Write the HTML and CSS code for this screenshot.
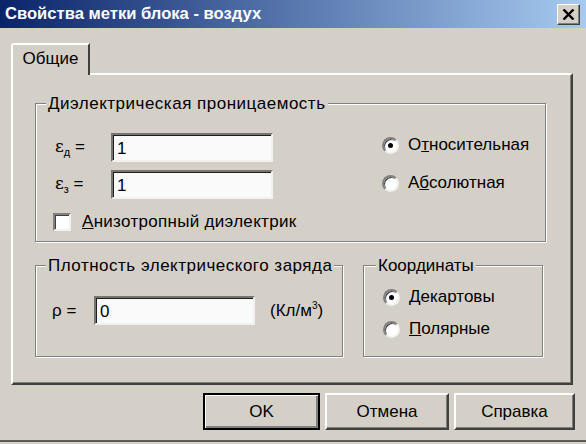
FILE: index.html
```html
<!DOCTYPE html>
<html lang="ru">
<head>
<meta charset="utf-8">
<title>Свойства метки блока - воздух</title>
<link rel="stylesheet" href="styles.css">
</head>
<body>
<div class="window">
  <div class="titlebar">
    <span class="title">Свойства метки блока - воздух</span>
    <span class="close">
      <svg width="13" height="11" viewBox="0 0 13 11"><path d="M1.5 0.5 L11.5 10.5 M11.5 0.5 L1.5 10.5" stroke="#000" stroke-width="2.4" fill="none"/></svg>
    </span>
  </div>
  <div class="body">
    <div class="tabs"><div class="tab">Общие</div></div>
    <div class="panel">
      <div class="group g1">
        <div class="legend">Диэлектрическая проницаемость</div>
        <div class="g1-body">
          <div class="fields">
            <div class="field"><span class="lbl"><span class="eps">ε<sub>д</sub></span> =</span><div class="input">1</div></div>
            <div class="field"><span class="lbl"><span class="eps">ε<sub>з</sub></span> =</span><div class="input">1</div></div>
            <div class="check"><span class="box"></span><span class="check-text"><u>А</u>низотропный диэлектрик</span></div>
          </div>
          <div class="radios r1">
            <div class="opt"><span class="radio on"></span><span>О<u>т</u>носительная</span></div>
            <div class="opt"><span class="radio"></span><span>А<u>б</u>солютная</span></div>
          </div>
        </div>
      </div>
      <div class="row2">
        <div class="group g2">
          <div class="legend">Плотность электрического заряда</div>
          <div class="g2-body">
            <span class="rho">ρ =</span>
            <div class="input in2">0</div>
            <span class="unit">(Кл/м<sup>3</sup>)</span>
          </div>
        </div>
        <div class="group g3">
          <div class="legend">Координаты</div>
          <div class="radios r2">
            <div class="opt"><span class="radio on"></span><span><u>Д</u>екартовы</span></div>
            <div class="opt"><span class="radio"></span><span><u>П</u>олярные</span></div>
          </div>
        </div>
      </div>
    </div>
    <div class="buttons">
      <div class="btn default b-ok">OK</div>
      <div class="btn b-cancel">Отмена</div>
      <div class="btn b-help">Справка</div>
    </div>
  </div>
</div>
</body>
</html>
```
FILE: styles.css
```css
* { box-sizing: border-box; }
html, body { margin: 0; padding: 0; background: #d4d0c8; }
body {
  font-family: "Liberation Sans", Arial, sans-serif;
  font-size: 17px;
  color: #000;
}
.window {
  width: 586px;
  height: 442px;
  background: #d4d0c8;
  display: flex;
  flex-direction: column;
  overflow: hidden;
  border-bottom: 2px solid #5e5c58;
}
.titlebar {
  height: 28px;
  flex: none;
  background: linear-gradient(90deg, #0a246a 0%, #a6caf0 100%);
  display: flex;
  align-items: center;
  justify-content: space-between;
  padding: 0 6px 0 5px;
}
.title {
  color: #fff;
  font-weight: bold;
  font-size: 16.6px;
}
.close {
  width: 23px;
  height: 21px;
  background: #d4d0c8;
  border: 1px solid;
  border-color: #fff #404040 #404040 #fff;
  box-shadow: inset -1px -1px 0 #808080;
  display: flex;
  align-items: center;
  justify-content: center;
}
.body {
  flex: 1;
  padding: 15px 13px 0 11px;
  display: flex;
  flex-direction: column;
}
.tabs { display: flex; height: 30px; flex: none; }
.tab {
  width: 79px;
  height: 32px;
  border-top: 2px solid #fff;
  border-left: 2px solid #fff;
  border-right: 2px solid #404040;
  border-top-left-radius: 3px;
  background: #d4d0c8;
  position: relative;
  z-index: 1;
  margin-bottom: -2px;
  display: flex;
  align-items: center;
  justify-content: center;
  padding-bottom: 2px;
}
.panel {
  height: 312px;
  flex: none;
  border: 2px solid;
  border-color: #fff #404040 #404040 #fff;
  box-shadow: inset -1px -1px 0 #808080;
  padding: 28px 25px 0 22px;
}
.group {
  border: 1px solid #808080;
  box-shadow: 1px 1px 0 #fff, inset 1px 1px 0 #fff;
}
.legend {
  width: fit-content;
  background: #d4d0c8;
  padding: 0 2px;
  margin: -9px 0 0 10px;
  line-height: 18px;
  height: 18px;
  letter-spacing: 0.5px;
}
.g1 { height: 139px; }
.g1-body { display: flex; padding: 20px 0 0 19px; }
.fields { display: flex; flex-direction: column; width: 218px; flex: none; }
.field { display: flex; align-items: center; height: 29px; margin-bottom: 8px; }
.field + .field { margin-bottom: 14px; }
.lbl { width: 56px; flex: none; }
.eps { font-family: "DejaVu Serif", serif; }
.eps sub { font-size: 11px; font-family: "Liberation Sans", sans-serif; }
.input {
  width: 162px;
  height: 29px;
  flex: none;
  background: #fafafa;
  border: 2px solid;
  border-color: #77756f #f2f1ee #f2f1ee #77756f;
  box-shadow: inset 1px 1px 0 #1e1e1e;
  padding: 2px 0 0 4px;
  font-size: 17px;
  line-height: 23px;
}
.check { display: flex; align-items: center; height: 18px; margin-left: -2px; white-space: nowrap; }
.check-text { letter-spacing: 0.3px; }
.box {
  width: 18px;
  height: 18px;
  flex: none;
  background: #fff;
  border: 2px solid;
  border-color: #808080 #f2f1ee #f2f1ee #808080;
  box-shadow: inset 1px 1px 0 #404040;
  margin-right: 11px;
}
.radios { display: flex; flex-direction: column; }
.r1 { margin-left: 109px; gap: 14px; }
.opt { display: flex; align-items: center; height: 24px; white-space: nowrap; }
.radio {
  width: 17px;
  height: 17px;
  flex: none;
  border-radius: 50%;
  background: #fff;
  border: 2px solid;
  border-color: #808080 #f2f1ee #f2f1ee #808080;
  box-shadow: inset 1px 1px 0 #404040;
  margin-right: 9px;
  display: flex;
  align-items: center;
  justify-content: center;
}
.radio.on::after {
  content: "";
  width: 5px;
  height: 5px;
  border-radius: 50%;
  background: #000;
}
.row2 { display: flex; gap: 20px; margin-top: 23px; }
.g2 { width: 308px; height: 92px; }
.g2-body { display: flex; align-items: center; padding: 21px 0 0 16px; }
.rho { width: 42px; flex: none; }
.in2 { width: 161px; }
.unit { margin-left: 15px; white-space: nowrap; }
.unit sup { font-size: 10px; }
.g3 { width: 180px; height: 92px; }
.g3 .legend { margin-left: 12px; letter-spacing: 0; }
.r2 { padding: 10px 0 0 19px; gap: 8px; }
.buttons {
  display: flex;
  justify-content: flex-end;
  gap: 5px;
  margin-top: 8px;
  margin-right: -2px;
}
.btn {
  height: 37px;
  background: #d4d0c8;
  border: 2px solid;
  border-color: #fff #404040 #404040 #fff;
  box-shadow: inset -1px -1px 0 #808080;
  display: flex;
  align-items: center;
  justify-content: center;
}
.btn.default {
  border: 2px solid #000;
  box-shadow: inset 1px 1px 0 #fff, inset -2px -2px 0 #808080;
}
.b-ok { width: 117px; }
.b-cancel { width: 124px; }
.b-help { width: 121px; }
```
